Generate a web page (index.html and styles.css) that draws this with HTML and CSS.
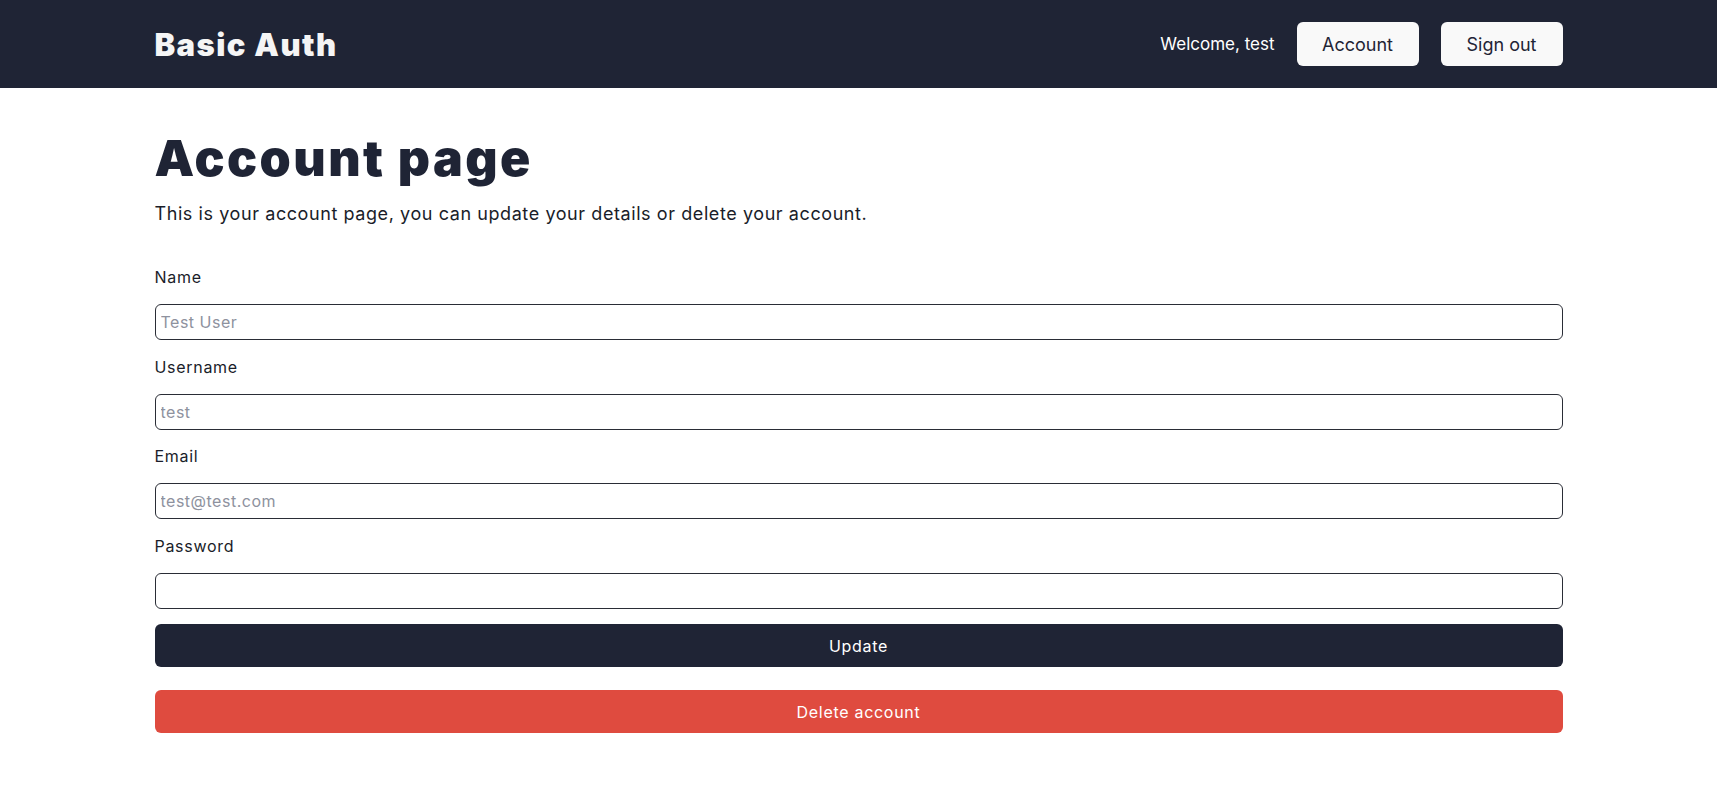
FILE: index.html
```html
<!DOCTYPE html>
<html lang="en">
<head>
<meta charset="utf-8">
<title>Basic Auth – Account</title>
<link rel="stylesheet" href="styles.css">
</head>
<body>
<header class="topbar">
  <div class="container topbar-inner">
    <div class="logo">Basic Auth</div>
    <nav class="nav">
      <span class="welcome">Welcome, test</span>
      <button class="nav-btn">Account</button>
      <button class="nav-btn">Sign out</button>
    </nav>
  </div>
</header>
<main class="container main">
  <h1 class="title">Account page</h1>
  <p class="lead">This is your account page, you can update your details or delete your account.</p>
  <form class="form">
    <div class="field">
      <label class="label" for="name">Name</label>
      <input class="input" id="name" type="text" placeholder="Test User">
    </div>
    <div class="field">
      <label class="label" for="username">Username</label>
      <input class="input" id="username" type="text" placeholder="test">
    </div>
    <div class="field">
      <label class="label" for="email">Email</label>
      <input class="input" id="email" type="email" placeholder="test@test.com">
    </div>
    <div class="field field-last">
      <label class="label" for="password">Password</label>
      <input class="input" id="password" type="password">
    </div>
    <button type="button" class="btn btn-primary">Update</button>
    <button type="button" class="btn btn-danger">Delete account</button>
  </form>
</main>
</body>
</html>
```
FILE: styles.css
```css
* { box-sizing: border-box; }
html, body { margin: 0; padding: 0; }
body {
  font-family: Inter, "Noto Sans", "Liberation Sans", sans-serif;
  color: #1f2435;
  background: #ffffff;
}
.container {
  width: 1408px;
  margin: 0 auto;
}
.topbar {
  background: #1f2435;
  height: 88px;
}
.topbar-inner {
  height: 100%;
  display: flex;
  align-items: center;
  justify-content: space-between;
}
.logo {
  color: #f5f5f5;
  font-size: 31px;
  font-weight: 900;
  letter-spacing: 1.4px;
  line-height: 1;
}
.nav {
  display: flex;
  align-items: center;
  gap: 22px;
}
.welcome {
  color: #ffffff;
  font-size: 17px;
}
.nav-btn {
  width: 122px;
  height: 44px;
  border: none;
  border-radius: 6px;
  background: #f9f9f9;
  color: #1f2435;
  font-family: inherit;
  font-size: 18px;
  cursor: pointer;
}
.main {
  padding-top: 45px;
}
.title {
  margin: 0;
  font-size: 50px;
  font-weight: 900;
  line-height: 50px;
  letter-spacing: 2.4px;
  color: #1f2435;
}
.lead {
  margin: 17px 0 0;
  font-size: 18px;
  line-height: 28px;
  letter-spacing: 0.58px;
  color: #1a1d29;
}
.form {
  margin-top: 37px;
  display: flex;
  flex-direction: column;
}
.field {
  display: flex;
  flex-direction: column;
  gap: 15px;
  margin-bottom: 14.7px;
}
.field-last { margin-bottom: 15px; }
.label {
  font-size: 16px;
  line-height: 24px;
  letter-spacing: 0.7px;
  color: #1a1d29;
}
.input {
  height: 36px;
  width: 100%;
  border: 1px solid #2a2d36;
  border-radius: 6px;
  padding: 0 5px;
  font-family: inherit;
  font-size: 16px;
  letter-spacing: 0.5px;
  color: #1f2435;
  background: #fff;
}
.input::placeholder { color: #8e929e; }
.btn {
  width: 100%;
  height: 43px;
  border: none;
  border-radius: 6px;
  color: #ffffff;
  font-family: inherit;
  font-size: 16px;
  letter-spacing: 0.7px;
  cursor: pointer;
}
.btn-primary { background: #1f2435; }
.btn-danger { background: #df4b3f; margin-top: 23px; }
```
